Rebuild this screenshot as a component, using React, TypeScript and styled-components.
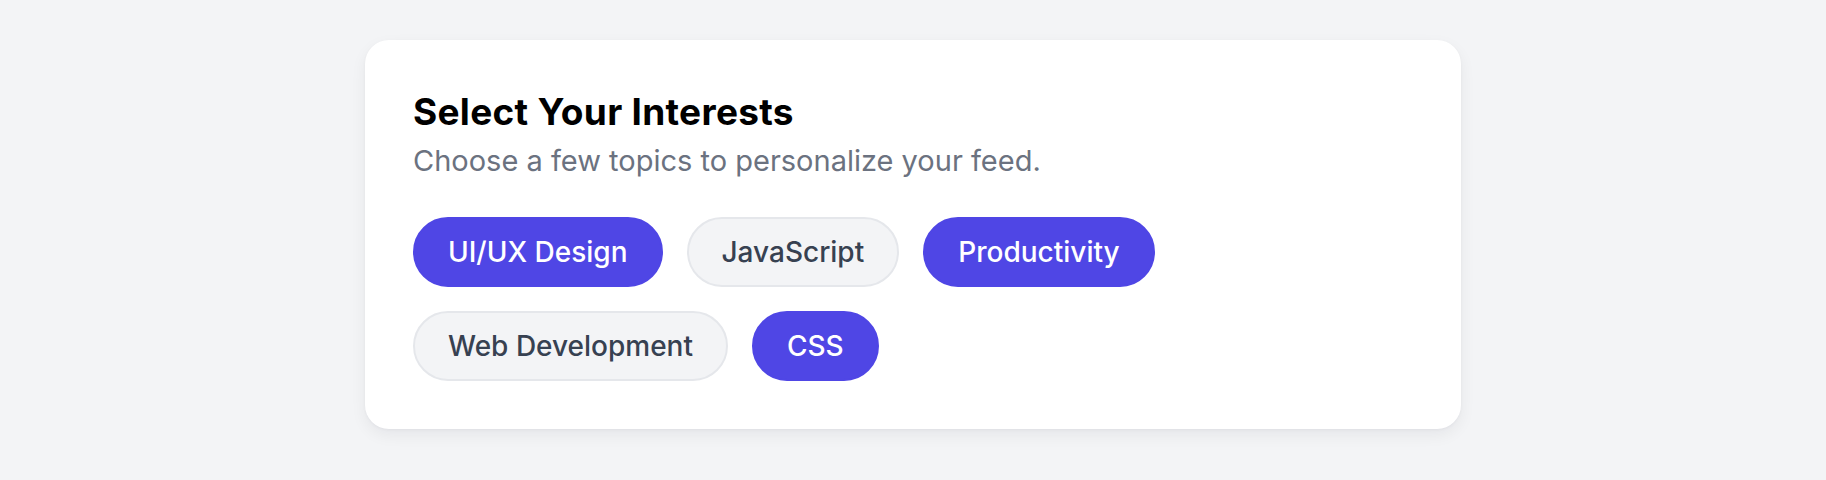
import { useState } from "react";
import styled, { createGlobalStyle } from "styled-components";

const GlobalStyle = createGlobalStyle`
  html, body {
    margin: 0;
    padding: 0;
    background: #f3f4f6;
    font-family: Inter, "Noto Sans", "Liberation Sans", sans-serif;
    -webkit-font-smoothing: antialiased;
  }
`;

const topics = [
  "UI/UX Design",
  "JavaScript",
  "Productivity",
  "Web Development",
  "CSS",
];

export default function App() {
  const [selected, setSelected] = useState<string[]>([
    "UI/UX Design",
    "Productivity",
    "CSS",
  ]);

  const toggle = (topic: string) => {
    setSelected((prev) =>
      prev.includes(topic) ? prev.filter((t) => t !== topic) : [...prev, topic]
    );
  };

  return (
    <>
      <GlobalStyle />
      <Page>
        <Card>
          <Title>Select Your Interests</Title>
          <Subtitle>Choose a few topics to personalize your feed.</Subtitle>
          <ChipList>
            {topics.map((topic) => (
              <Chip
                key={topic}
                $active={selected.includes(topic)}
                onClick={() => toggle(topic)}
              >
                {topic}
              </Chip>
            ))}
          </ChipList>
        </Card>
      </Page>
    </>
  );
}

const Page = styled.div`
  padding: 40px 0;
  display: flex;
  justify-content: center;
`;

const Card = styled.div`
  box-sizing: border-box;
  width: 1096px;
  padding: 48px;
  background: #ffffff;
  border-radius: 24px;
  box-shadow: 0 6px 16px rgba(17, 24, 39, 0.06), 0 1px 3px rgba(17, 24, 39, 0.04);
`;

const Title = styled.h2`
  margin: 0;
  font-size: 37px;
  line-height: 48px;
  font-weight: 700;
  color: #000000;
  letter-spacing: 0.3px;
`;

const Subtitle = styled.p`
  margin: 5px 0 0;
  font-size: 29px;
  line-height: 40px;
  color: #6b7280;
`;

const ChipList = styled.div`
  display: flex;
  flex-wrap: wrap;
  gap: 24px;
  margin-top: 36px;
`;

const Chip = styled.button<{ $active: boolean }>`
  box-sizing: border-box;
  height: 70px;
  padding: 0 33px;
  border-radius: 999px;
  font-family: inherit;
  font-size: 28px;
  font-weight: 500;
  cursor: pointer;
  border: 2px solid ${(p) => (p.$active ? "#4f46e5" : "#e5e7eb")};
  background: ${(p) => (p.$active ? "#4f46e5" : "#f3f4f6")};
  color: ${(p) => (p.$active ? "#ffffff" : "#374151")};
`;
